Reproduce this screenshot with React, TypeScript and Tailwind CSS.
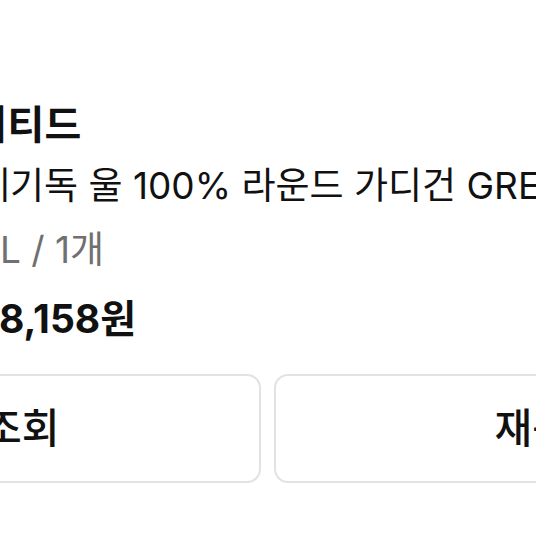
export default function App() {
  return (
    <div className="w-[536px] h-[536px] overflow-hidden bg-white font-['Inter','Noto_Sans_CJK_KR',sans-serif] text-[#111111]">
      <div className="w-[1121px] -ml-[293px] pt-[100px]">
        <div className="flex gap-[39px]">
          {/* thumbnail sits left of the crop */}
          <div className="w-[190px] h-[190px] shrink-0 rounded-lg bg-[#f2f2f2]" />
          <div className="flex flex-col whitespace-nowrap text-[37px] leading-[50px]">
            <div className="-ml-[2px] text-[40px] font-bold">에디티드</div>
            <div className="mt-[11px] ml-[40px]">세기독 울 100% 라운드 가디건 GREY</div>
            <div className="mt-[14px] ml-[64px] text-[#707070]">L / 1개</div>
            <div className="mt-[19px] ml-[63px] text-[39px] font-bold">8,158원</div>
          </div>
        </div>
        <div className="mt-[30px] grid grid-cols-2 gap-[13px]">
          <button className="h-[109px] rounded-[14px] border-2 border-[#e2e2e2] bg-white text-[41px] font-medium">
            배송조회
          </button>
          <button className="h-[109px] rounded-[14px] border-2 border-[#e2e2e2] bg-white text-[41px] font-medium">
            재구매
          </button>
        </div>
      </div>
    </div>
  );
}
